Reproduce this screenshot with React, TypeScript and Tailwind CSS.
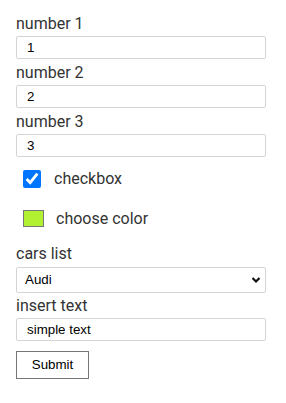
import { useState } from 'react';

const labelCls = "block h-[25px] text-[16px] leading-[25px] text-[#333] [font-family:Roboto,'Liberation_Sans',sans-serif]";
const inputCls =
  "block h-[23px] w-[250px] rounded-[2px] border border-[#d4d4d4] bg-white pl-[10px] text-[13.33px] text-black outline-none [font-family:'Liberation_Sans',Arial,sans-serif]";

export default function App() {
  const [n1, setN1] = useState('1');
  const [n2, setN2] = useState('2');
  const [n3, setN3] = useState('3');
  const [checked, setChecked] = useState(true);
  const [car, setCar] = useState('audi');
  const [text, setText] = useState('simple text');

  return (
    <form className="px-4 pt-[11px] bg-white" onSubmit={(e) => e.preventDefault()}>
      <label className={labelCls}>number 1</label>
      <input className={inputCls} value={n1} onChange={(e) => setN1(e.target.value)} />
      <label className={`${labelCls} mt-px`}>number 2</label>
      <input className={inputCls} value={n2} onChange={(e) => setN2(e.target.value)} />
      <label className={`${labelCls} mt-px`}>number 3</label>
      <input className={inputCls} value={n3} onChange={(e) => setN3(e.target.value)} />

      <div className="mt-[13px] flex h-[18px] items-center">
        <input
          type="checkbox"
          checked={checked}
          onChange={(e) => setChecked(e.target.checked)}
          className="ml-[7px] m-0 h-[18px] w-[18px] accent-[#0075ff]"
        />
        <span className="ml-[13px] text-[16px] text-[#333] [font-family:Roboto,sans-serif]">checkbox</span>
      </div>

      <div className="mt-[22px] flex h-[17px] items-center">
        <span className="ml-[7px] block h-[17px] w-[21px] border border-[#767676] bg-[#b1f132]" />
        <span className="ml-[12px] text-[16px] text-[#333] [font-family:Roboto,sans-serif]">choose color</span>
      </div>

      <label className={`${labelCls} mt-[14px]`}>cars list</label>
      <div className="relative mt-px w-[250px]">
        <select
          value={car}
          onChange={(e) => setCar(e.target.value)}
          className="block h-[26px] w-[250px] appearance-none rounded-[2px] border border-[#d4d4d4] bg-white pl-[8px] text-[13.33px] text-black outline-none [font-family:'Liberation_Sans',Arial,sans-serif]"
        >
          <option value="audi">Audi</option>
          <option value="bmw">BMW</option>
          <option value="volvo">Volvo</option>
        </select>
        <svg
          className="pointer-events-none absolute right-[5px] top-[9px]"
          width="10"
          height="8"
          viewBox="0 0 10 8"
        >
          <path d="M1.5 2 L5 5.5 L8.5 2" fill="none" stroke="#111" strokeWidth="2.2" />
        </svg>
      </div>

      <label className={labelCls}>insert text</label>
      <input className={`${inputCls} h-[22px]`} value={text} onChange={(e) => setText(e.target.value)} />

      <button
        type="submit"
        className="mt-[10px] h-[28px] w-[73px] border border-[#767676] bg-white text-[13.33px] text-black [font-family:'Liberation_Sans',Arial,sans-serif]"
      >
        Submit
      </button>
    </form>
  );
}
